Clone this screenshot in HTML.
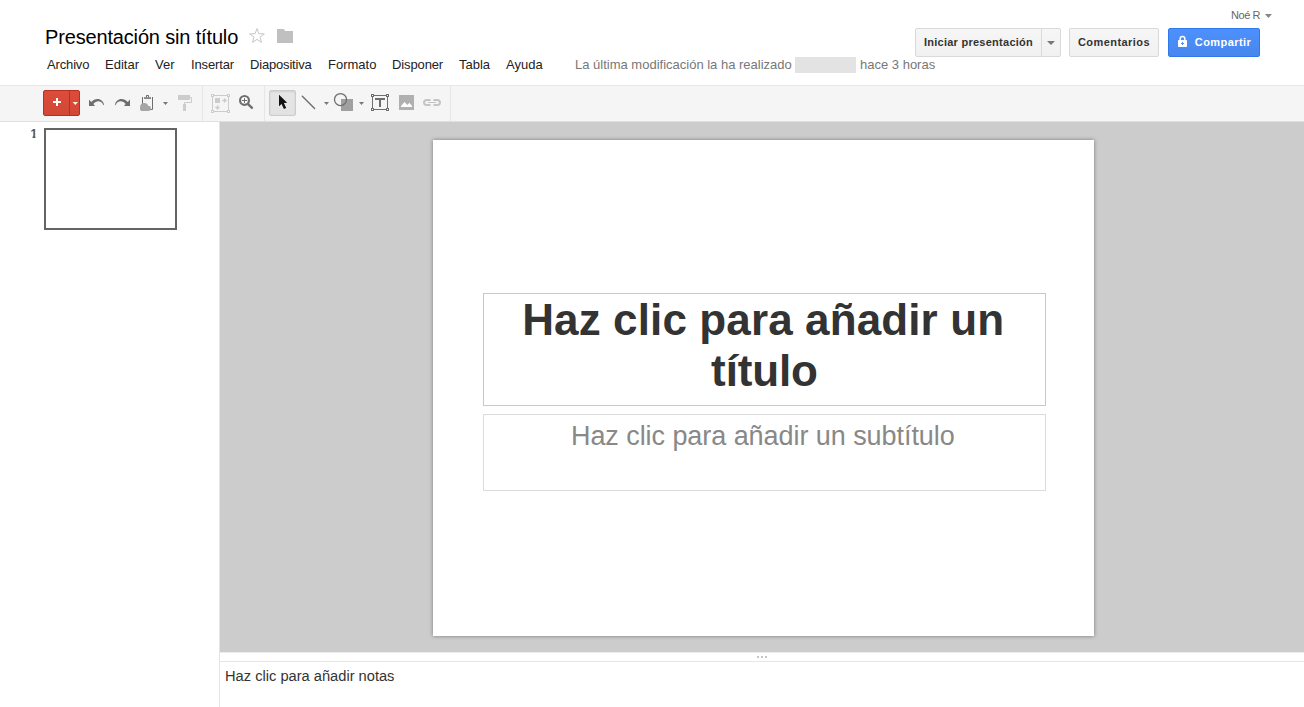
<!DOCTYPE html>
<html lang="es">
<head>
<meta charset="utf-8">
<title>Presentación sin título</title>
<style>
*{box-sizing:border-box;margin:0;padding:0}
html,body{width:1304px;height:707px;overflow:hidden;background:#fff;font-family:"Liberation Sans",Arial,sans-serif;color:#000}
.abs{position:absolute}
#user{position:absolute;left:1231px;top:9px;font-size:11px;color:#666;line-height:13px;white-space:nowrap;letter-spacing:-.45px}
#user .arr{display:inline-block;width:7px;height:4px;background:#868686;clip-path:polygon(0 0,100% 0,50% 100%);margin-left:5px;vertical-align:1px}
#title{position:absolute;left:45px;top:25px;font-size:20px;line-height:24px;color:#000;white-space:nowrap;letter-spacing:-0.16px}
#menu{position:absolute;left:47px;top:57px;font-size:13px;line-height:15px;color:#222;white-space:nowrap}
#menu span{position:absolute;top:0}
#lastmod{position:absolute;left:575px;top:57px;font-size:13px;line-height:15px;color:#777;white-space:nowrap}
#redact{position:absolute;left:795px;top:57px;width:61px;height:16px;background:#e3e3e3}
.btn{position:absolute;top:28px;height:29px;border:1px solid #d9d9d9;background:linear-gradient(#f6f6f6,#f1f1f1);border-radius:2px;font-size:11px;font-weight:bold;color:#333;line-height:27px;text-align:center;white-space:nowrap}
#toolbar{position:absolute;left:0;top:85px;width:1304px;height:37px;background:#f5f5f5;border-top:1px solid #e7e7e7;border-bottom:1px solid #e0e0e0}
.sep{position:absolute;top:0;width:1px;height:35px;background:#e6e6e6}
#work{position:absolute;left:220px;top:122px;width:1084px;height:530px;background:#ccc}
#slide{position:absolute;left:433px;top:140px;width:661px;height:496px;background:#fff;box-shadow:0 0 4px rgba(0,0,0,.42)}
#tbox{position:absolute;left:483px;top:293px;width:563px;height:113px;border:1px solid #c8c8c8;text-align:center;font-weight:bold;font-size:44px;line-height:51px;color:#333}
#sbox{position:absolute;left:483px;top:414px;width:563px;height:77px;border:1px solid #dcdcdc;text-align:center;font-size:27px;line-height:31px;color:#888}
#thumb{position:absolute;left:44px;top:128px;width:133px;height:102px;border:2px solid #646464;background:#fff}
#num{position:absolute;left:30.5px;top:127px;font-size:12px;font-weight:bold;color:#555;line-height:14px;clip-path:polygon(0 0,100% 0,100% 9.3px,4.9px 9.3px,4.9px 100%,2px 100%,2px 9.3px,0 9.3px)}
#notes{position:absolute;left:219px;top:652px;width:1085px;height:55px;border-left:1px solid #e4e4e4;background:#fff}
#notes .line{position:absolute;left:0;top:9px;width:1085px;height:1px;background:#e7e7e7}
#notes .txt{position:absolute;left:5px;top:16px;font-size:14.67px;line-height:17px;color:#333}
#notes .dots{position:absolute;left:537px;top:4px;width:10px;height:2px;background:linear-gradient(90deg,#c6c6c6 0 2px,transparent 2px 4px,#c6c6c6 4px 6px,transparent 6px 8px,#c6c6c6 8px 10px)}

#newbtn{position:absolute;left:43px;top:90px;width:37px;height:26px;border:1px solid #b5301f;border-radius:2px;background:linear-gradient(#dd4b39,#d14836)}
#newbtn .div{position:absolute;left:25px;top:0;width:1px;height:24px;background:#b5301f}
#selbtn{position:absolute;left:269px;top:90px;width:27px;height:26px;border:1px solid #ccc;border-radius:2px;background:linear-gradient(#e6e6e6,#e2e2e2);box-shadow:inset 0 1px 2px rgba(0,0,0,.1)}
</style>
</head>
<body>
<div id="user">Noé R<span class="arr"></span></div>
<div id="title">Presentación sin título</div>

<svg width="60" height="30" viewBox="240 22 60 30" style="position:absolute;left:240px;top:22px">
<path d="M257,28.6 L258.9,33.7 L264.3,33.9 L260,37.2 L261.5,42.4 L257,39.4 L252.5,42.4 L254,37.2 L249.7,33.9 L255.100,33.7 Z" fill="none" stroke="#c6c6c6" stroke-width="1" stroke-linejoin="miter"/>
<path d="M277,29 L283.7,29 L285.3,31 L293,31 L293,43 L277,43 Z" fill="#c0c0c0"/>
</svg>
<div id="menu">
<span style="left:0;letter-spacing:-.15px">Archivo</span><span style="left:58px">Editar</span><span style="left:108px">Ver</span><span style="left:144px;letter-spacing:-.13px">Insertar</span><span style="left:203px;letter-spacing:-.18px">Diapositiva</span><span style="left:281px">Formato</span><span style="left:345px;letter-spacing:-.12px">Disponer</span><span style="left:412px">Tabla</span><span style="left:459px">Ayuda</span>
</div>
<div id="lastmod">La última modificación la ha realizado <span style="display:inline-block;width:61px"></span> hace 3 horas</div>
<div id="redact"></div>

<div class="btn" style="left:915px;width:127px;border-radius:2px 0 0 2px;letter-spacing:.26px">Iniciar presentación</div>
<div class="btn" style="left:1041px;width:20px;border-radius:0 2px 2px 0"><span style="position:absolute;left:5px;top:12px;width:0;height:0;border-left:4px solid transparent;border-right:4px solid transparent;border-top:4px solid #777"></span></div>
<div class="btn" style="left:1069px;width:90px;letter-spacing:.45px">Comentarios</div>
<div class="btn" style="left:1168px;width:92px;background:linear-gradient(#4d90fe,#4787ed);border-color:#3079ed;color:#fff;padding-left:18px;letter-spacing:.43px"><svg width="12" height="14" viewBox="1177 35 12 14" style="position:absolute;left:8px;top:6px"><rect x="1178" y="40" width="9" height="7" rx="0.8" fill="#fff"/><path d="M1180.2,40.5 L1180.2,38.5 Q1180.2,36.5 1182.5,36.5 Q1184.8,36.5 1184.8,38.5 L1184.8,40.5" fill="none" stroke="#fff" stroke-width="1.5"/><rect x="1182" y="42" width="1" height="3" fill="#4d8ffd"/><rect x="1181" y="43" width="3" height="1" fill="#4d8ffd"/></svg>Compartir</div>

<div id="toolbar">
<div class="sep" style="left:202px"></div>
<div class="sep" style="left:264px"></div>
<div class="sep" style="left:450px"></div>
</div>


<div id="newbtn"><div class="div"></div>
<svg width="37" height="26" style="position:absolute;left:-1px;top:-1px" shape-rendering="crispEdges"><rect x="10" y="11" width="8" height="2" fill="#fff"/><rect x="13" y="8" width="2" height="8" fill="#fff"/><path d="M29.6,12 L35,12 L32.3,14.9 Z" fill="#fff" fill-opacity=".9" shape-rendering="auto"/></svg></div>
<div id="selbtn"></div>
<svg id="tbicons" width="1304" height="37" viewBox="0 85 1304 37" style="position:absolute;left:0;top:85px">
<!-- undo -->
<path d="M89,99.5 L89,106 L95,106 L93.4,103.9 C94.8,102.2 96.5,101.3 98.3,101.3 C100.6,101.3 102.5,102.8 103.4,105.2 L104,104.8 C103.5,101.5 100.9,99 97.6,99 C95.2,99 93,100.2 91.2,102 Z" fill="#6e6e6e"/>
<!-- redo -->
<path d="M130,99.5 L130,106 L124,106 L125.6,103.9 C124.2,102.2 122.5,101.3 120.7,101.3 C118.4,101.3 116.5,102.8 115.6,105.2 L115,104.8 C115.5,101.5 118.1,99 121.4,99 C123.8,99 126,100.2 127.8,102 Z" fill="#6e6e6e"/>
<!-- paste -->
<path d="M142.5,97 L142.5,109.5 L152.5,109.5 L152.5,97" fill="none" stroke="#6e6e6e" stroke-width="1"/>
<rect x="144" y="97.3" width="7" height="1.5" fill="#6e6e6e"/>
<rect x="145.9" y="95" width="3.2" height="2.6" rx="1.1" fill="#6e6e6e"/>
<rect x="147" y="96" width="1" height="1.2" fill="#f5f5f5"/>
<g fill="#a6a6a6"><circle cx="144.2" cy="107" r="4"/><circle cx="148.3" cy="108.3" r="2.6"/><circle cx="142.6" cy="108.4" r="2.6"/><rect x="142.6" y="108" width="5.9" height="3"/></g>
<path d="M163,102 L168,102 L165.5,105 Z" fill="#777"/>
<!-- paint roller -->
<rect x="178" y="95" width="12" height="5" fill="#ccc"/>
<path d="M190,97.5 L191.5,97.5 L191.5,102.5 L184.5,102.5 L184.5,104" fill="none" stroke="#ccc" stroke-width="1"/>
<rect x="183" y="104" width="3" height="7" fill="#ccc"/>
<!-- fit -->
<g shape-rendering="crispEdges">
<rect x="212.5" y="95.5" width="16" height="16" fill="none" stroke="#ccc"/>
<rect x="211.5" y="94.5" width="2" height="2" fill="#fff" stroke="#ccc"/>
<rect x="227.5" y="94.5" width="2" height="2" fill="#fff" stroke="#ccc"/>
<rect x="211.5" y="110.5" width="2" height="2" fill="#fff" stroke="#ccc"/>
<rect x="227.5" y="110.5" width="2" height="2" fill="#fff" stroke="#ccc"/>
<rect x="215" y="98" width="5" height="5" fill="#ccc"/>
<rect x="222" y="100" width="4" height="1" fill="#ccc"/>
<rect x="217" y="105" width="1" height="4" fill="#ccc"/>
</g>
<path d="M223.8,97.8 L227,100.5 L223.8,103.2 Z" fill="#ccc"/>
<path d="M214.8,106.8 L220.2,106.8 L217.5,110 Z" fill="#ccc"/>
<!-- zoom -->
<circle cx="244.5" cy="100.4" r="4.4" fill="#fff" stroke="#6e6e6e" stroke-width="2.2"/>
<path d="M248.3,104.3 L252,107.8" stroke="#6e6e6e" stroke-width="2.4" stroke-linecap="round"/>
<rect x="242" y="100" width="5" height="1" fill="#6e6e6e" shape-rendering="crispEdges"/>
<rect x="244" y="98" width="1" height="5" fill="#6e6e6e" shape-rendering="crispEdges"/>
<!-- cursor -->
<path d="M279,94.7 L279,106.2 L281.6,103.9 L283.9,109.1 L286.2,108.1 L283.9,103 L287.2,102.7 Z" fill="#111"/>
<!-- line -->
<path d="M302.3,96.2 L314.6,108.5" stroke="#6e6e6e" stroke-width="1.4" stroke-linecap="round"/>
<path d="M324,102 L329,102 L326.5,105 Z" fill="#777"/>
<!-- shape -->
<rect x="341" y="99" width="12" height="12" fill="#a0a0a0"/>
<circle cx="340.5" cy="99.5" r="6" fill="none" stroke="#6e6e6e" stroke-width="1.25"/>
<path d="M359,102 L364,102 L361.5,105 Z" fill="#777"/>
<!-- textbox -->
<g shape-rendering="crispEdges">
<rect x="372.5" y="95.5" width="15" height="14" fill="none" stroke="#6e6e6e"/>
<rect x="371.5" y="94.5" width="2" height="2" fill="#fff" stroke="#6e6e6e"/>
<rect x="386.5" y="94.5" width="2" height="2" fill="#fff" stroke="#6e6e6e"/>
<rect x="371.5" y="108.5" width="2" height="2" fill="#fff" stroke="#6e6e6e"/>
<rect x="386.5" y="108.5" width="2" height="2" fill="#fff" stroke="#6e6e6e"/>
<rect x="375" y="98" width="10" height="2" fill="#6e6e6e"/>
<rect x="379" y="100" width="2" height="7" fill="#6e6e6e"/>
</g>
<!-- image -->
<rect x="399" y="95" width="15" height="15" fill="#b0b0b0"/>
<path d="M401,107 L401,106 L404.5,102 L407.3,105 L409.4,102.8 L412,106 L412,107 Z" fill="#fff"/>
<!-- link -->
<path d="M430.5,100 L427,100 Q424,100 424,102.5 Q424,105 427,105 L430.5,105" fill="none" stroke="#c4c4c4" stroke-width="2"/>
<path d="M433.5,100 L437,100 Q440,100 440,102.5 Q440,105 437,105 L433.5,105" fill="none" stroke="#c4c4c4" stroke-width="2"/>
<rect x="428" y="102" width="8" height="1" fill="#c4c4c4"/>
</svg>

<div id="work"></div>
<div style="position:absolute;left:219px;top:122px;width:1px;height:585px;background:#e4e4e4"></div>
<div id="slide"></div>
<div id="tbox"><span style="position:relative;left:-1.3px;letter-spacing:.12px">Haz clic para añadir un</span><br><span style="letter-spacing:-.12px">título</span></div>
<div id="sbox"><div style="margin-top:6px;letter-spacing:-.06px;position:relative;left:-1.7px">Haz clic para añadir un subtítulo</div></div>

<div id="num">1</div>
<div id="thumb"></div>

<div id="notes"><div style="position:absolute;left:0;top:0;width:1085px;height:1px;background:#ececec"></div><div class="dots"></div><div class="line"></div><div class="txt">Haz clic para añadir notas</div></div>
</body>
</html>
